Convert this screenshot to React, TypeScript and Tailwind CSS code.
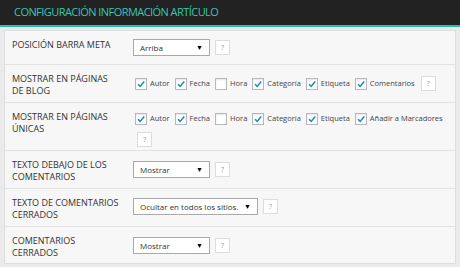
import React from "react";

const font = { fontFamily: '"Open Sans", "Noto Sans", sans-serif' };

function Check({ checked }: { checked: boolean }) {
  return (
    <span className="inline-flex h-[12px] w-[12px] shrink-0 items-center justify-center border border-[#b4b9be] bg-white shadow-[inset_0_1px_2px_rgba(0,0,0,0.1)]">
      {checked && (
        <svg width="10" height="10" viewBox="0 0 10 10">
          <path d="M2 5.2 L4.2 7.4 L8.2 2.6" fill="none" stroke="#1e8cbe" strokeWidth="1.6" />
        </svg>
      )}
    </span>
  );
}

function Help() {
  return (
    <span className="inline-flex h-[15px] w-[15px] shrink-0 items-center justify-center border border-[#dcdcdc] bg-white text-[7px] leading-none text-[#999]">
      ?
    </span>
  );
}

function Select({ value, w }: { value: string; w: string }) {
  return (
    <span className={`flex h-[17px] ${w} items-center justify-between border border-[#a9a9a9] bg-white pl-[6px] pr-[6px] text-[8px] leading-none text-[#333]`}>
      <span className="whitespace-nowrap">{value}</span>
      <span className="text-[7px] text-black">▼</span>
    </span>
  );
}

function Opt({ label, checked }: { label: string; checked: boolean }) {
  return (
    <span className="mr-[5px] flex items-center">
      <Check checked={checked} />
      <span className="ml-[3px] whitespace-nowrap text-[7.5px] leading-none text-[#444]">{label}</span>
    </span>
  );
}

function Row({
  h,
  label,
  children,
  cpt,
  last,
}: {
  h: string;
  label: React.ReactNode;
  children: React.ReactNode;
  cpt: string;
  last?: boolean;
}) {
  return (
    <div className={`flex ${h} ${last ? "" : "border-b border-[#e3e3e3]"}`}>
      <div className="w-[128px] shrink-0 pl-[7px] pt-[8px] text-[9px] leading-[12px] whitespace-nowrap text-[#333]">
        {label}
      </div>
      <div className={`flex-1 ${cpt}`}>{children}</div>
    </div>
  );
}

export default function App() {
  return (
    <div className="h-[267px] w-[460px] overflow-hidden bg-[#ebebeb]" style={font}>
      <div className="flex h-[27px] items-center border-b-2 border-[#22c1ad] bg-[#222222] pl-[14px] pb-[1px] text-[11px] tracking-[-0.55px] text-[#37c6b2]">
        CONFIGURACIÓN INFORMACIÓN ARTÍCULO
      </div>
      <div className="px-[4px] pt-[3px]">
        <div className="border border-[#dedede] bg-[#f7f7f7]">
          <Row h="h-[34px]" label="POSICIÓN BARRA META" cpt="pt-[8px]">
            <div className="flex items-center gap-[5px]">
              <Select value="Arriba" w="w-[77px]" />
              <Help />
            </div>
          </Row>
          <Row
            h="h-[38px]"
            label={
              <>
                MOSTRAR EN PÁGINAS
                <br />
                DE BLOG
              </>
            }
            cpt="pt-[11px] pl-[2px]"
          >
            <div className="flex items-center">
              <Opt label="Autor" checked />
              <Opt label="Fecha" checked />
              <Opt label="Hora" checked={false} />
              <Opt label="Categoría" checked />
              <Opt label="Etiqueta" checked />
              <Opt label="Comentarios" checked />
              <span className="ml-[1px] flex">
                <Help />
              </span>
            </div>
          </Row>
          <Row
            h="h-[48px]"
            label={
              <>
                MOSTRAR EN PÁGINAS
                <br />
                ÚNICAS
              </>
            }
            cpt="pt-[10px] pl-[2px]"
          >
            <div className="flex items-center">
              <Opt label="Autor" checked />
              <Opt label="Fecha" checked />
              <Opt label="Hora" checked={false} />
              <Opt label="Categoría" checked />
              <Opt label="Etiqueta" checked />
              <Opt label="Añadir a Marcadores" checked />
            </div>
            <div className="mt-[7px] flex pl-[2px]">
              <Help />
            </div>
          </Row>
          <Row
            h="h-[38px]"
            label={
              <>
                TEXTO DEBAJO DE LOS
                <br />
                COMENTARIOS
              </>
            }
            cpt="pt-[10px]"
          >
            <div className="flex items-center gap-[5px]">
              <Select value="Mostrar" w="w-[77px]" />
              <Help />
            </div>
          </Row>
          <Row
            h="h-[38px]"
            label={
              <>
                TEXTO DE COMENTARIOS
                <br />
                CERRADOS
              </>
            }
            cpt="pt-[9px]"
          >
            <div className="flex items-center gap-[5px]">
              <Select value="Ocultar en todos los sitios." w="w-[125px]" />
              <Help />
            </div>
          </Row>
          <Row
            h="h-[36px]"
            last
            label={
              <>
                COMENTARIOS
                <br />
                CERRADOS
              </>
            }
            cpt="pt-[10px]"
          >
            <div className="flex items-center gap-[5px]">
              <Select value="Mostrar" w="w-[77px]" />
              <Help />
            </div>
          </Row>
        </div>
      </div>
    </div>
  );
}
